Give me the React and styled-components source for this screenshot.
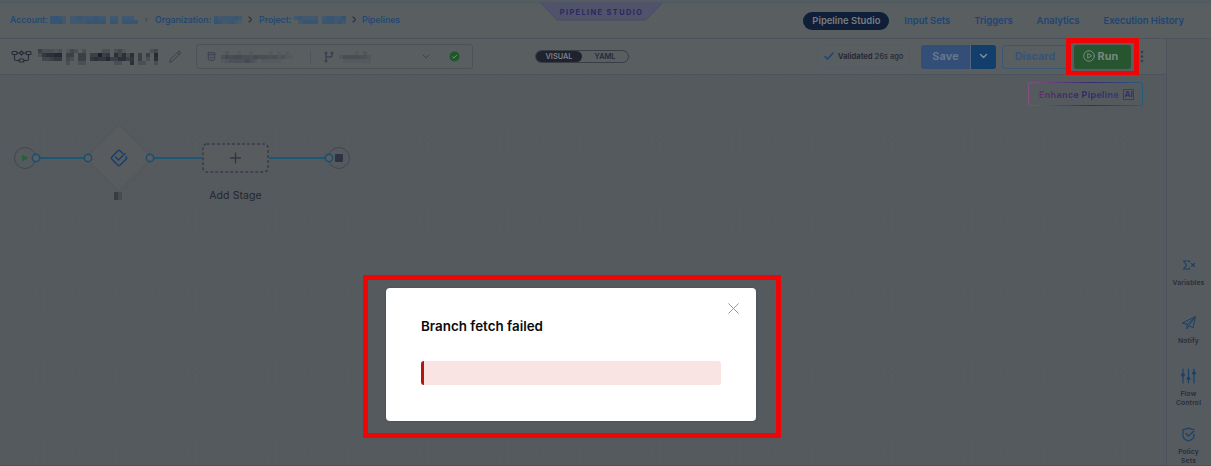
import React from "react";
import styled, { createGlobalStyle, css } from "styled-components";

const Global = createGlobalStyle`
  * { box-sizing: border-box; }
  body { margin: 0; overflow: hidden; font-family: Inter, "Liberation Sans", sans-serif; }
  svg { display: block; flex: none; }
`;

const c = {
  bar: "#595e61",
  canvas: "#555a5e",
  line: "#4d535d",
  blue: "#1c4672",
  ink: "#262a38",
  muted: "#3c404f",
  red: "#ee0505",
};

const Page = styled.div`
  position: relative;
  width: 1211px;
  height: 466px;
  overflow: hidden;
  display: flex;
  flex-direction: column;
  background: ${c.bar};
  color: ${c.ink};
  border-bottom: 1px solid #5b4b51;
`;

const Header = styled.header`
  height: 39px;
  flex: none;
  display: flex;
  justify-content: space-between;
  border-top: 2px solid #535d61;
  border-bottom: 1px solid ${c.line};
  box-shadow: inset 0 1px 0 #4f5a5f;
`;

const Breadcrumb = styled.nav`
  display: flex;
  align-items: center;
  height: 35px;
  padding-left: 10px;
  font-size: 8.8px;
  font-weight: 500;
  color: ${c.blue};
  white-space: nowrap;
`;

const Crumb = styled.span`
  display: flex;
  align-items: center;
  justify-content: space-between;
  width: ${(p) => p.$w}px;
`;

const Separator = styled.span`
  width: ${(p) => p.$w}px;
  display: flex;
  justify-content: center;
  color: #30343f;
`;

const StudioTag = styled.div`
  position: absolute;
  left: 540px;
  top: 2px;
  width: 123px;
  height: 19px;
  display: flex;
  justify-content: center;
  line-height: 21px;
  font-size: 7.4px;
  font-weight: 700;
  letter-spacing: 1.4px;
  color: #292a61;
  svg { position: absolute; inset: 0; }
  span { position: relative; white-space: nowrap; }
`;

const Tabs = styled.nav`
  display: flex;
  align-items: center;
  height: 37px;
  padding-right: 27px;
  gap: 24px;
  font-size: 9.45px;
  font-weight: 600;
  color: ${c.blue};
  white-space: nowrap;
`;

const Tab = styled.span`
  ${(p) =>
    p.$active &&
    css`
      width: 86px;
      margin-right: -9px;
      text-align: center;
      line-height: 18px;
      border-radius: 9px;
      background: #101f38;
      color: #787d82;
    `}
`;

const Body = styled.div`
  flex: 1;
  min-height: 0;
  display: flex;
`;

const Main = styled.main`
  width: 1166px;
  display: flex;
  flex-direction: column;
`;

const Toolbar = styled.div`
  height: 36px;
  flex: none;
  display: flex;
  align-items: center;
  padding-left: 11px;
  border-bottom: 1px solid ${c.line};
`;

const NameBlock = styled.div`
  width: 185px;
  display: flex;
  align-items: center;
`;

const Spacer = styled.div`
  flex: ${(p) => (p.$w ? `0 0 ${p.$w}px` : "1")};
`;

const RepoBox = styled.div`
  width: 277px;
  height: 25px;
  display: flex;
  align-items: center;
  border: 1px solid #4d5259;
  border-radius: 3px;
  color: ${c.muted};
`;

const RepoPart = styled.div`
  width: 114px;
  height: 14px;
  padding-left: 10px;
  display: flex;
  align-items: center;
  gap: 5px;
  border-right: 1px solid #50555b;
`;

const BranchPart = styled.div`
  flex: 1;
  display: flex;
  align-items: center;
  padding: 0 12px 0 13px;
`;

const ViewToggle = styled.div`
  width: 94px;
  height: 13px;
  margin-left: 62px;
  display: flex;
  border: 1px solid #383c45;
  border-radius: 7px;
  font-size: 7.4px;
  font-weight: 600;
  line-height: 11px;
  text-align: center;
`;

const ToggleItem = styled.span`
  width: 46px;
  border-radius: 6px;
  ${(p) => p.$on && css`background: #20222e; color: #7d8186;`}
`;

const Validated = styled.div`
  width: 93px;
  height: 24px;
  margin-left: 188px;
  display: flex;
  align-items: center;
  gap: 4px;
  padding: 0 0 1px 6px;
  border: 1px solid #4f5e64;
  border-radius: 8px;
  font-size: 7.5px;
  font-weight: 500;
  white-space: nowrap;
  b { font-weight: 700; }
`;

const Button = styled.div`
  height: 24px;
  width: ${(p) => p.$w}px;
  display: flex;
  align-items: center;
  justify-content: center;
  gap: 3px;
  padding-bottom: 1px;
  font-size: 10.8px;
  letter-spacing: 0.15px;
  font-weight: 700;
`;

const SaveButton = styled(Button)`
  margin-left: 11px;
  border-radius: 3px 0 0 3px;
  background: #344f77;
  color: #65778f;
`;

const SaveMenu = styled(Button)`
  border-left: 1px solid #52677e;
  border-radius: 0 3px 3px 0;
  background: #123e6b;
  color: #7c8a96;
`;

const DiscardButton = styled(Button)`
  margin-left: 6px;
  border: 1px solid #3a5777;
  border-radius: 3px;
  color: #355478;
  font-size: 10.8px;
  letter-spacing: 0;
`;

const RunFrame = styled.div`
  position: relative;
  width: 73px;
  height: 38px;
  margin-left: -2px;
  border: 5px solid ${c.red};
  background: ${c.bar};
  display: flex;
  align-items: center;
  justify-content: center;
`;

const RunButton = styled(Button)`
  border-radius: 3px;
  padding-right: 4px;
  background: #265530;
  color: #7b8780;
`;

const Canvas = styled.section`
  position: relative;
  flex: 1;
  background-color: ${c.canvas};
  background-image: radial-gradient(circle, #52575c 0.6px, transparent 0.9px);
  background-size: 7.25px 7.25px;
`;

const EnhanceButton = styled.div`
  position: absolute;
  left: 1028px;
  top: 7px;
  width: 115px;
  height: 24px;
  border: 1.5px solid transparent;
  border-radius: 3px;
  background:
    linear-gradient(${c.canvas}, ${c.canvas}) padding-box,
    linear-gradient(90deg, #86507f, #352b72 55%, #235f7c) border-box;
  display: flex;
  align-items: center;
  justify-content: center;
  gap: 4px;
  padding: 0 0 0 2px;
  font-size: 9.1px;
  font-weight: 700;
  letter-spacing: 0.25px;
  white-space: nowrap;
`;

const GradientText = styled.span`
  background: linear-gradient(90deg, #5c3569, #302a68 55%, #34397a);
  background-clip: text;
  color: transparent;
`;

const AiBadge = styled.span`
  width: 11px;
  height: 11px;
  border: 1px solid #393a70;
  color: #30306b;
  font-size: 8px;
  line-height: 9px;
  letter-spacing: 0;
  text-align: center;
`;

const Link = styled.div`
  position: absolute;
  top: 82px;
  left: ${(p) => p.$x}px;
  width: ${(p) => p.$w}px;
  height: 2px;
  background: #1e5676;
`;

const Port = styled.div`
  position: absolute;
  top: 79px;
  left: ${(p) => p.$x - 4}px;
  width: 8px;
  height: 8px;
  border-radius: 50%;
  border: 1.5px solid #174c72;
  box-shadow: 0 0 0 0.4px #174c72;
  background: ${c.bar};
`;

const Terminal = styled.div`
  position: absolute;
  top: 72px;
  left: ${(p) => p.$x}px;
  width: 22px;
  height: 22px;
  border-radius: 50%;
  border: 1px solid #44464f;
  display: flex;
  align-items: center;
  justify-content: center;
`;

const StageDiamond = styled.div`
  position: absolute;
  left: 96px;
  top: 60px;
  width: 46px;
  height: 46px;
  border-radius: 3px;
  background: #585c5f;
  box-shadow: 0 0 2px #4f5458;
  transform: rotate(45deg);
`;

const StageIcon = styled.div`
  position: absolute;
  left: 110px;
  top: 74px;
`;

const StageName = styled.div`
  position: absolute;
  left: 114px;
  top: 117px;
`;

const AddStage = styled.div`
  position: absolute;
  left: 202px;
  top: 68px;
  width: 67px;
  height: 30px;
  background: #585c5f;
  border-radius: 4px;
`;

const AddStageLabel = styled.div`
  position: absolute;
  left: 185px;
  top: 113px;
  width: 101px;
  text-align: center;
  font-size: 10.5px;
  line-height: 15px;
  letter-spacing: 0.1px;
  color: #24262e;
`;

const SideRail = styled.aside`
  width: 45px;
  border-left: 1px solid ${c.line};
  padding: 218px 1px 0 0;
  display: flex;
  flex-direction: column;
  align-items: center;
  background: #565b5f;
  color: #1b4068;
`;

const RailItem = styled.div`
  height: ${(p) => p.$h}px;
  flex: none;
  display: flex;
  flex-direction: column;
  align-items: center;
  gap: 6px;
  font-size: 6.7px;
  font-weight: 600;
  letter-spacing: 0.2px;
  line-height: 8.5px;
  text-align: center;
  span { color: #292d3a; }
`;

const DialogFrame = styled.div`
  position: absolute;
  left: 363px;
  top: 275px;
  width: 418px;
  height: 163px;
  border: 5px solid ${c.red};
  padding: 8px 0 0 18px;
`;

const Dialog = styled.div`
  position: relative;
  width: 370px;
  height: 133px;
  border-radius: 4px;
  background: #fff;
  padding: 29px 35px 0;
  box-shadow: 0 0 2px #44494d;
`;

const CloseButton = styled.div`
  position: absolute;
  top: 15px;
  right: 17px;
`;

const DialogTitle = styled.h2`
  margin: 0 0 25.4px;
  font-size: 13.4px;
  line-height: 19px;
  font-weight: 600;
  color: #0b0b0d;
`;

const ErrorBar = styled.div`
  height: 24px;
  border-radius: 3px;
  border-left: 3px solid #b41710;
  background: #fae4e3;
`;

/* Redacted text: each character is a shade from 0 (clear) to 9 (solid). */
function Mosaic({ rows, cell, color }) {
  return (
    <svg width={rows[0].length * cell} height={rows.length * cell} fill={color} shapeRendering="crispEdges">
      {rows.flatMap((row, y) =>
        [...row].map((v, x) =>
          v === "0" ? null : (
            <rect key={x + "-" + y} x={x * cell} y={y * cell} width={cell} height={cell} opacity={v / 9} />
          )
        )
      )}
    </svg>
  );
}

const Icon = ({ w = 12, h = w, box = "0 0 24 24", sw = 2, children }) => (
  <svg width={w} height={h} viewBox={box} fill="none" stroke="currentColor" strokeWidth={sw} strokeLinecap="round" strokeLinejoin="round">
    {children}
  </svg>
);

const Chevron = ({ small }) => (
  <Icon w={small ? 3 : 5} h={small ? 5 : 7} box="0 0 5 7" sw={1.2}><path d="M1 1l2.5 2.5L1 6" /></Icon>
);

export default function App() {
  return (
    <Page>
      <Global />
      <Header>
        <Breadcrumb>
          <Crumb $w={128}>Account:<Mosaic cell={4} color="#1f4f80" rows={["5653034544454404404440", "5564034435555505505555"]} /></Crumb>
          <Separator $w={17}><Chevron small /></Separator>
          <Crumb $w={87}>Organization:<Mosaic cell={4} color="#1f4f80" rows={["5344454", "6534532"]} /></Crumb>
          <Separator $w={17}><Chevron /></Separator>
          <Crumb $w={87}>Project:<Mosaic cell={4} color="#1f4f80" rows={["4534340355346", "0355550555453"]} /></Crumb>
          <Separator $w={16}><Chevron /></Separator>
          <span>Pipelines</span>
        </Breadcrumb>
        <Tabs>
          <Tab $active>Pipeline Studio</Tab>
          <Tab>Input Sets</Tab>
          <Tab>Triggers</Tab>
          <Tab>Analytics</Tab>
          <Tab>Execution History</Tab>
        </Tabs>
      </Header>
      <StudioTag>
        <svg width="123" height="19"><path d="M0 0H123L106 18H17Z" fill="#50536a" /><path d="M0 0L17 18H106L123 0" fill="none" stroke="#494c6b" /></svg>
        <span>PIPELINE STUDIO</span>
      </StudioTag>
      <Body>
        <Main>
          <Toolbar>
            <NameBlock>
              <Icon w={21} h={13} box="0 0 21 13" sw={1.1}>
                <rect x="1" y="1.5" width="5" height="3" rx="1" />
                <rect x="15" y="1.5" width="5" height="3" rx="1" />
                <path d="M10.5 1l2 2-2 2-2-2zM6 3h2.500M12.500 3H15M3.500 4.500V9q0 1.500 1.500 1.500h3M17.500 4.500V9q0 1.500-1.500 1.500h-3" />
                <rect x="8" y="9" width="5" height="3" rx="1" />
              </Icon>
              <Spacer $w={6} />
              <Mosaic cell={4} color="#171a25" rows={["422212013202000022023100000023", "256677044044044845063626040407", "033455032044056557446645040206", "000000020022000000022006022002"]} />
              <Spacer $w={11} />
              <Icon w={13} box="0 0 13 13" sw={0.8}><path d="M1 12l.8-3L9.500 1.300q.8-.6 1.600.2t.2 1.600L3.800 11zM8.500 2.500l2 2" stroke="#343946" /></Icon>
            </NameBlock>
            <RepoBox>
              <RepoPart>
                <Icon w={9} box="0 0 9 9" sw={0.9}><rect x=".8" y=".7" width="7.400" height="2" rx=".8" /><path d="M1.300 2.700v4q0 1.600 1.600 1.600h3.200q1.600 0 1.600-1.600v-4M3.200 5.600h2.600" /></Icon>
                <Mosaic cell={4} color="#373a44" rows={["020010010000101010", "354554435444342311", "123333532011111000"]} />
              </RepoPart>
              <BranchPart>
                <Icon w={10} h={12} box="0 0 10 12" sw={1.4}><circle cx="2" cy="2" r=".8" /><circle cx="2" cy="10" r=".8" /><circle cx="8" cy="2" r=".8" /><path d="M2 3v6M8 3v1.500Q8 6 6 6H2" /></Icon>
                <Spacer $w={5} />
                <Mosaic cell={4} color="#373a44" rows={["00001020", "24444332", "01111111"]} />
                <Spacer />
                <Icon w={8} h={5} box="0 0 8 5" sw={1}><path d="M1 1l3 3 3-3" /></Icon>
                <Spacer $w={19} />
                <svg width="11" height="11" viewBox="0 0 11 11"><circle cx="5.500" cy="5.500" r="5" fill="#20572a" /><path d="M3.300 5.600l1.600 1.500 2.900-3" fill="none" stroke="#7b8a80" /></svg>
              </BranchPart>
            </RepoBox>
            <ViewToggle><ToggleItem $on>VISUAL</ToggleItem><ToggleItem>YAML</ToggleItem></ViewToggle>
            <Validated>
              <Icon w={10} h={8} box="0 0 10 8" sw={1.5}><path d="M1 4.500L3.500 7 9 1" stroke="#194677" /></Icon>
              <span><b>Validated</b> 26s ago</span>
            </Validated>
            <SaveButton $w={49}>Save</SaveButton>
            <SaveMenu $w={26}><Icon w={9} h={6} box="0 0 9 6" sw={1.5}><path d="M1.500 1.500l3 3 3-3" /></Icon></SaveMenu>
            <DiscardButton $w={66}>Discard</DiscardButton>
            <RunFrame>
              <RunButton $w={57}>
                <Icon w={12} box="0 0 12 12" sw={1}><circle cx="6" cy="6" r="5.300" /><path d="M4.700 3.700v4.600L8.300 6z" /></Icon>
                Run
              </RunButton>
            </RunFrame>
            <svg width="6" height="14" fill="#393c48"><circle cx="3" cy="2" r="1.300" /><circle cx="3" cy="6.500" r="1.300" /><circle cx="3" cy="11" r="1.300" /></svg>
          </Toolbar>
          <Canvas>
            <EnhanceButton><GradientText>Enhance Pipeline</GradientText><AiBadge>AI</AiBadge></EnhanceButton>
            <Terminal $x={14}><svg width="8" height="8"><path d="M1 .5L7.500 4 1 7.500z" fill="#286039" /></svg></Terminal>
            <Terminal $x={328}><svg width="8" height="8"><rect width="8" height="8" rx="1" fill="#303144" /></svg></Terminal>
            <StageDiamond />
            <Link $x={36} $w={52} />
            <Link $x={151} $w={51} />
            <Link $x={269} $w={60} />
            <Port $x={35.5} />
            <Port $x={88} />
            <Port $x={150} />
            <Port $x={328.5} />
            <StageIcon>
              <Icon w={18} box="0 0 18 18" sw={1.4}><path d="M12.500 4.300L10 1.800q-1-1-2 0L1.800 8q-1 1 0 2L8 16.200q1 1 2 0L16.200 10q1-1 0-2M5.500 8l3 3L15 4.500" stroke="#153d6e" /></Icon>
            </StageIcon>
            <StageName><Mosaic cell={4} color="#2b2f35" rows={["63", "63"]} /></StageName>
            <AddStage>
              <svg width="67" height="30"><rect x="1" y="1" width="65" height="28" rx="4" fill="none" stroke="#383b49" strokeWidth="1.500" strokeDasharray="3 2" /><path d="M28 15h11M33.500 9.500v11" stroke="#343743" strokeWidth="1.400" /></svg>
            </AddStage>
            <AddStageLabel>Add Stage</AddStageLabel>
          </Canvas>
        </Main>
        <SideRail>
          <RailItem $h={58}>
            <Icon w={14} h={16} box="0 0 14 16" sw={1.1}><path d="M7.500 5V4H1.500l3 4-3 4h6v-1M9.500 6.500l3 3M12.500 6.500l-3 3" /></Icon>
            <span>Variables</span>
          </RailItem>
          <RailItem $h={53}>
            <Icon w={16} box="0 0 16 16" sw={1}><path d="M1.500 8L14.500 1.500 12 13 8 10.500 6 14V9.500zM14.500 1.500L6 9.500M14.500 1.500L8 10.500" /></Icon>
            <span>Notify</span>
          </RailItem>
          <RailItem $h={59}>
            <Icon w={15} h={16} box="0 0 15 16" sw={1.2}><path d="M2 1v14M7.500 1v14M13 1v14" /><path d="M1.500 7h1M7 10.500h1M12.500 5h1" strokeWidth="3" /></Icon>
            <span>Flow<br />Control</span>
          </RailItem>
          <RailItem $h={50}>
            <Icon w={13} h={15} box="0 0 13 15" sw={1.2}><path d="M12 7v2q0 3-5.500 5Q1 12 1 9V2.500Q4 2.500 6.500 1 9 2.500 12 2.500M4 6.500l2.500 2.500L12 4" /></Icon>
            <span>Policy<br />Sets</span>
          </RailItem>
        </SideRail>
      </Body>
      <DialogFrame>
        <Dialog>
          <CloseButton><Icon w={11} box="0 0 11 11" sw={1}><path d="M.7.7l9.600 9.600M10.300.7L.7 10.300" stroke="#9596aa" /></Icon></CloseButton>
          <DialogTitle>Branch fetch failed</DialogTitle>
          <ErrorBar />
        </Dialog>
      </DialogFrame>
    </Page>
  );
}
